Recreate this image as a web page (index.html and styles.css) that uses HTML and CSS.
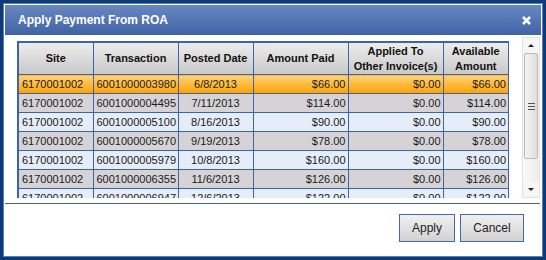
FILE: index.html
```html
<!DOCTYPE html>
<html>
<head>
<title>Apply Payment From ROA</title>
<link rel="stylesheet" href="styles.css">
</head>
<body>
<div class="dialog">
  <div class="titlebar">
    <span class="title">Apply Payment From ROA</span>
    <svg class="close" width="9" height="9" viewBox="0 0 9 9"><path d="M1 1L8 8M8 1L1 8" stroke="#fff" stroke-width="2.6"/></svg>
  </div>
  <div class="body">
    <div class="grid-wrap">
      <table class="grid">
        <colgroup><col class="c-site"><col class="c-trans"><col class="c-date"><col class="c-amt"><col class="c-app"><col class="c-avail"></colgroup>
        <tr class="header"><th>Site</th><th>Transaction</th><th>Posted Date</th><th>Amount Paid</th><th>Applied To<br>Other Invoice(s)</th><th>Available<br>Amount</th></tr>
        <tr class="selected"><td>6170001002</td><td>6001000003980</td><td class="date">6/8/2013</td><td class="num">$66.00</td><td class="num">$0.00</td><td class="num">$66.00</td></tr>
        <tr class="odd"><td>6170001002</td><td>6001000004495</td><td class="date">7/11/2013</td><td class="num">$114.00</td><td class="num">$0.00</td><td class="num">$114.00</td></tr>
        <tr class="even"><td>6170001002</td><td>6001000005100</td><td class="date">8/16/2013</td><td class="num">$90.00</td><td class="num">$0.00</td><td class="num">$90.00</td></tr>
        <tr class="odd"><td>6170001002</td><td>6001000005670</td><td class="date">9/19/2013</td><td class="num">$78.00</td><td class="num">$0.00</td><td class="num">$78.00</td></tr>
        <tr class="even"><td>6170001002</td><td>6001000005979</td><td class="date">10/8/2013</td><td class="num">$160.00</td><td class="num">$0.00</td><td class="num">$160.00</td></tr>
        <tr class="odd"><td>6170001002</td><td>6001000006355</td><td class="date">11/6/2013</td><td class="num">$126.00</td><td class="num">$0.00</td><td class="num">$126.00</td></tr>
        <tr class="even"><td>6170001002</td><td>6001000006947</td><td class="date">12/6/2013</td><td class="num">$122.00</td><td class="num">$0.00</td><td class="num">$122.00</td></tr>
      </table>
    </div>
    <div class="scrollbar">
      <div class="sb-btn"><span class="arrow-up"></span></div>
      <div class="sb-thumb"><span class="grip"></span></div>
      <div class="sb-track"></div>
      <div class="sb-btn"><span class="arrow-down"></span></div>
    </div>
  </div>
  <div class="separator"></div>
  <div class="footer">
    <button class="btn apply">Apply</button>
    <button class="btn cancel">Cancel</button>
  </div>
</div>
</body>
</html>
```
FILE: styles.css
```css
html, body {margin: 0; height: 100%;}
body {background-color: #0d3b78; font-family: "Liberation Sans", Arial, sans-serif; color: #1a1a1a; overflow: hidden;}

.dialog {box-sizing: border-box; margin: 3px; width: 540px; height: 254px; border: 1px solid #5b7fba; background-color: #fff; padding: 1px; display: flex; flex-direction: column;}

.titlebar {flex: 0 0 30px; display: flex; align-items: center; justify-content: space-between; padding: 0 10px 0 13px; background: linear-gradient(#6888c2, #4063a5); color: #fff;}
.title {font-size: 12px; font-weight: bold;}
.close {display: block; margin-top: 1px;}

.body {display: flex; height: 161px; margin-top: 2px; padding-left: 12px;}
.grid-wrap {width: 492px; overflow: hidden; padding-top: 4px;}
.grid {table-layout: fixed; width: 492px; border-collapse: collapse; border: 2px solid #3e63a9; font-size: 11px;}
.c-site {width: 75px;}
.c-trans {width: 85px;}
.c-date {width: 75px;}
.c-amt {width: 95px;}
.c-app {width: 95px;}
.c-avail {width: 66px;}
.grid th, .grid td {border: 1px solid #3e63a9; white-space: nowrap; overflow: hidden;}
.grid th {height: 31px; padding: 0 2px; line-height: 15px; font-weight: bold; color: #111; text-align: center; background: linear-gradient(#ececec, #c9c9c9);}
.grid td {height: 18px; padding: 0 3px; line-height: 18px;}
.grid td.date {text-align: center;}
.grid td.num {text-align: right; padding-right: 2px;}
tr.selected td {background: linear-gradient(#ffd27a, #ffa200);}
tr.odd td {background-color: #d6d3d6;}
tr.even td {background-color: #e5edf8;}

.scrollbar {margin-left: auto; margin-right: 1px; width: 18px; display: flex; flex-direction: column; background-color: #f6f6f6; border: 1px solid #e2e2e2; box-sizing: border-box;}
.sb-btn {flex: 0 0 15px; display: flex; align-items: center; justify-content: center;}
.arrow-up {width: 0; height: 0; border-left: 3px solid transparent; border-right: 3px solid transparent; border-bottom: 3px solid #222;}
.arrow-down {width: 0; height: 0; border-left: 3px solid transparent; border-right: 3px solid transparent; border-top: 3px solid #222;}
.sb-thumb {flex: 0 0 106px; margin: 0 1px; box-sizing: border-box; border: 1px solid #b9b9b9; border-radius: 2px; background: linear-gradient(to right, #f4f4f4, #dedede); display: flex; align-items: center; justify-content: center;}
.grip {width: 7px; height: 5px; border-top: 1px solid #555; border-bottom: 1px solid #555; position: relative;}
.grip::after {content: ""; position: absolute; left: 0; right: 0; top: 2px; border-top: 1px solid #555;}
.sb-track {flex: 1; background: linear-gradient(to right, #f9f9f9, #ececec);}

.separator {height: 1px; margin: 5px 1px 0 0; background-color: #3e63a9;}

.footer {display: flex; justify-content: flex-end; gap: 5px; padding: 10px 17px 0 0;}
.btn {height: 28px; border: 1px solid #4869a9; background: linear-gradient(#f0f0f0, #d2d2d2); font-family: "Liberation Sans", Arial, sans-serif; font-size: 12px; color: #222; padding: 0;}
.apply {width: 56px;}
.cancel {width: 64px;}
```
